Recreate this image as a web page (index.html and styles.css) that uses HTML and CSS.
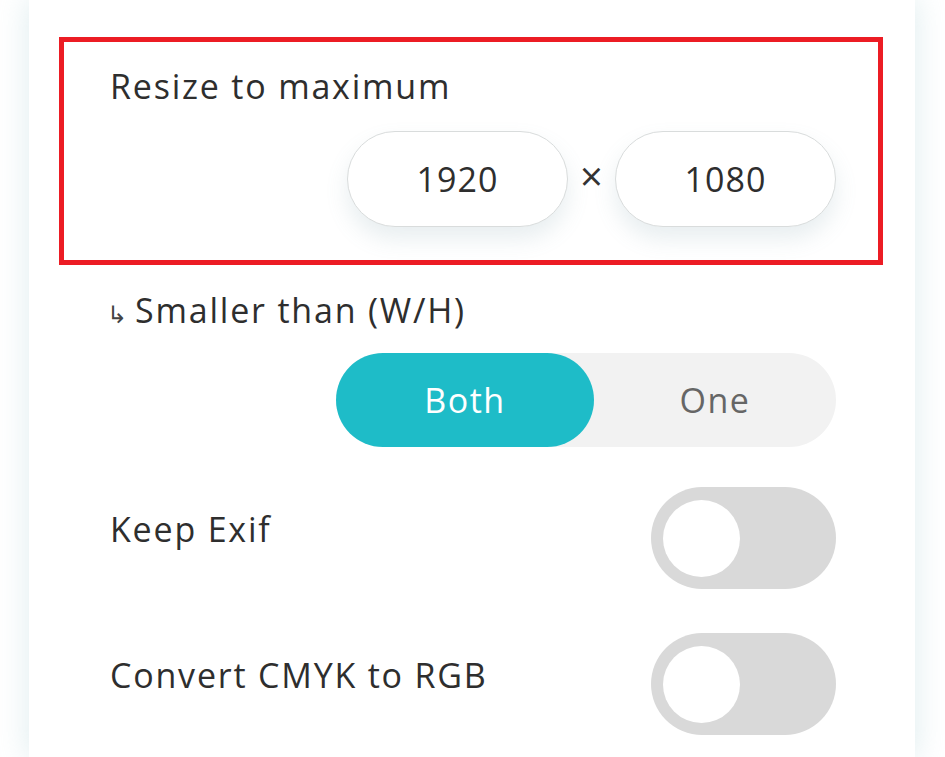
FILE: index.html
```html
<!DOCTYPE html>
<html lang="en">
<head>
    <meta charset="UTF-8">
    <meta name="viewport" content="width=device-width, initial-scale=1.0">
    <title>Resize settings</title>
    <link rel="stylesheet" href="styles.css">
</head>
<body>
	<div class="card">
		<div class="setting highlight">
			<p class="label">Resize to maximum</p>
			<div class="sizeInputs">
				<input class="sizeBox" type="text" value="1920">
				<span class="times">&times;</span>
				<input class="sizeBox" type="text" value="1080">
			</div>
		</div>
		<div class="setting sub">
			<p class="label"><span class="arrow">&#8627;</span>Smaller than (W/H)</p>
			<div class="segmented">
				<span class="seg active">Both</span>
				<span class="seg">One</span>
			</div>
		</div>
		<div class="switchRow">
			<p class="label">Keep Exif</p>
			<span class="toggle"><span class="knob"></span></span>
		</div>
		<div class="switchRow">
			<p class="label">Convert CMYK to RGB</p>
			<span class="toggle"><span class="knob"></span></span>
		</div>
	</div>
</body>
</html>
```

FILE: styles.css
```css
        body,html{
            margin: 0;
            padding: 0;
            background: #fff;
            overflow: hidden;
            font-family: "Open Sans", "Noto Sans", sans-serif;
            font-weight: 400;
            color: #2e2e2e;
        }
        .card{
            width: 886px;
            height: 757px;
            margin-left: 29px;
            padding: 37px 79px 0 81px;
            box-sizing: border-box;
            background: #fff;
            box-shadow: 0 0 28px 2px rgba(170, 205, 212, 0.35);
        }
        .label{
            margin: 0;
            font-size: 34px;
            line-height: 40px;
            letter-spacing: 1.8px;
        }
        .highlight{
            margin: 0 -47px 0 -51px;
            padding: 24px 42px 33px 46px;
            border: 5px solid #ec1c24;
        }
        .sizeInputs{
            display: flex;
            justify-content: flex-end;
            align-items: center;
            margin-top: 25px;
        }
        .sizeBox{
            width: 221px;
            height: 96px;
            box-sizing: border-box;
            border: 1px solid #d9dcdc;
            border-radius: 48px;
            background: #fff;
            box-shadow: 0 12px 22px rgba(110, 150, 160, 0.16);
            font-family: inherit;
            font-size: 34px;
            letter-spacing: 1px;
            color: #2e2e2e;
            text-align: center;
            outline: none;
            padding: 0;
        }
        .times{
            width: 47px;
            text-align: center;
            font-size: 40px;
            line-height: 1;
            color: #333;
            margin-top: -6px;
        }
        .sub{
            margin-top: 25px;
        }
        .arrow{
            display: inline-block;
            font-size: 24px;
            letter-spacing: 0;
            margin: 0 8px 0 -3px;
            color: #444;
        }
        .segmented{
            display: flex;
            width: 500px;
            height: 94px;
            margin: 19px 0 0 auto;
            border-radius: 47px;
            background: #f2f2f2;
            font-size: 34px;
            letter-spacing: 1.5px;
        }
        .seg{
            flex: 1;
            display: flex;
            align-items: center;
            justify-content: center;
            color: #666;
        }
        .seg.active{
            flex: 0 0 258px;
            border-radius: 47px;
            background: #1ebcc8;
            color: #fff;
        }
        .switchRow{
            display: flex;
            justify-content: space-between;
            align-items: flex-start;
            margin-top: 40px;
        }
        .switchRow + .switchRow{
            margin-top: 44px;
        }
        .switchRow .label{
            padding-top: 22px;
        }
        .toggle{
            display: flex;
            align-items: center;
            width: 185px;
            height: 102px;
            padding-left: 12px;
            box-sizing: border-box;
            border-radius: 51px;
            background: #d9d9d9;
        }
        .knob{
            width: 77px;
            height: 77px;
            border-radius: 50%;
            background: #fff;
        }
```
